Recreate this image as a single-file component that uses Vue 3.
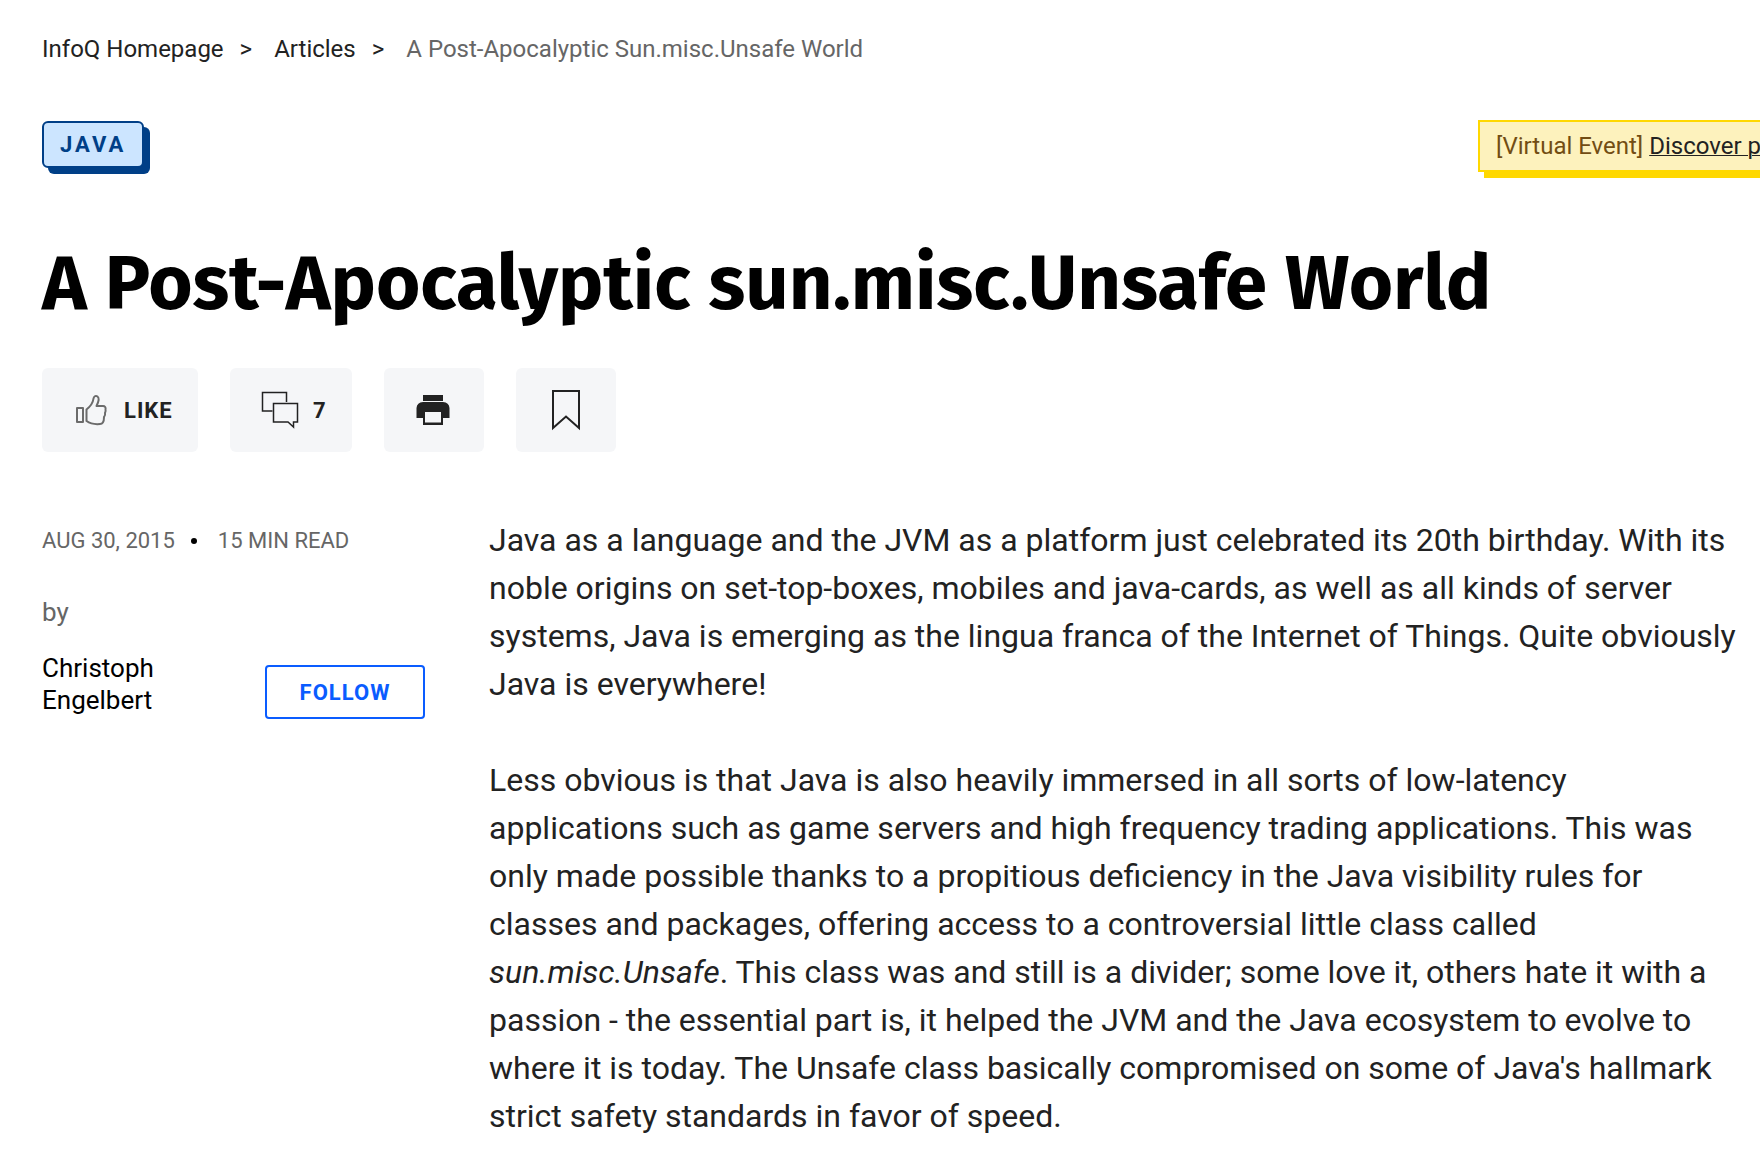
<script setup>
const crumbs = ['InfoQ Homepage', 'Articles']
</script>

<template>
  <div class="page">
    <nav class="crumbs" aria-label="Breadcrumb">
      <template v-for="crumb in crumbs" :key="crumb">
        <a href="#">{{ crumb }}</a>
        <span class="sep">&gt;</span>
      </template>
      <span class="current">A Post-Apocalyptic Sun.misc.Unsafe World</span>
    </nav>

    <div class="topics">
      <a class="tag" href="#">JAVA</a>
      <div class="banner">[Virtual Event] <a href="#">Discover p</a></div>
    </div>

    <h1>A Post-Apocalyptic sun.misc.Unsafe World</h1>

    <div class="actions">
      <button type="button" class="like">
        <svg width="34" height="34" viewBox="0 0 34 34" fill="none" stroke="#6b6b6b" stroke-width="2" stroke-linejoin="round">
          <path d="M3 15h6v14H3z" />
          <path d="M12.500 28V16.500C17 13 19 9.500 19.500 5.500C20 3 22 2.500 23.500 3.500C25.500 5 24.500 9 22.500 13H29C31 13 32 14.500 31.500 16.500C32 18 31.500 19 31 20C31.500 22 31 23 30 24C30 27 29 31 26 31C21 31.500 16 30.500 12.500 28z" />
        </svg>
        LIKE
      </button>
      <button type="button" class="comments">
        <svg width="38" height="38" viewBox="0 0 38 38" fill="none" stroke="#222" stroke-width="1.500">
          <path d="M11.500 20H1.500V1.500H25.500V11" />
          <path d="M12.500 12.500H36.500V31H32.500V36L27 31H12.500z" />
        </svg>
        7
      </button>
      <button type="button" class="square" aria-label="Print">
        <svg width="36" height="32" viewBox="0 0 36 32">
          <path fill="#222" d="M7 1H27V7H7zM7 8H27Q33 8.500 33.500 14V24H27V31H7V24H.5V14Q1 8.500 7 8z" />
          <path fill="#f5f6f8" d="M9 18H25V28.500H9z" />
        </svg>
      </button>
      <button type="button" class="square" aria-label="Bookmark">
        <svg width="28" height="42" viewBox="0 0 28 42" fill="none" stroke="#222" stroke-width="2">
          <path d="M1 2H27V39L14 27.500L1 39z" />
        </svg>
      </button>
    </div>

    <div class="content">
      <aside>
        <p class="meta"><span>AUG 30, 2015</span><span class="dot"></span><span>15 MIN READ</span></p>
        <p class="by">by</p>
        <div class="author">
          <a href="#">Christoph Engelbert</a>
          <button type="button" class="follow">FOLLOW</button>
        </div>
      </aside>
      <article>
        <p>
          Java as a language and the JVM as a platform just celebrated its 20th birthday. With its noble
          origins on set-top-boxes, mobiles and java-cards, as well as all kinds of server systems, Java is
          emerging as the lingua franca of the Internet of Things. Quite obviously Java is everywhere!
        </p>
        <p>
          Less obvious is that Java is also heavily immersed in all sorts of low-latency applications such
          as game servers and high frequency trading applications. This was only made possible thanks to a
          propitious deficiency in the Java visibility rules for classes and packages, offering access to a
          controversial little class called <em>sun.misc.Unsafe</em>. This class was and still is a divider;
          some love it, others hate it with a passion - the essential part is, it helped the JVM and the
          Java ecosystem to evolve to where it is today. The Unsafe class basically compromised on some of
          Java's hallmark strict safety standards in favor of speed.
        </p>
      </article>
    </div>
  </div>
</template>

<style>
body {
  background: #fff;
}
</style>

<style scoped>
.page {
  padding: 32px 0 16px 42px;
  overflow: hidden;
  font-family: Roboto, "Liberation Sans", sans-serif;
  color: #222;
}
a {
  color: inherit;
  text-decoration: none;
}
p,
h1 {
  margin: 0;
}
.crumbs {
  display: flex;
  font-size: 24px;
  line-height: 34px;
}
.sep {
  margin: 0 22px 0 16px;
}
.current {
  color: #666;
}
.topics {
  display: flex;
  justify-content: space-between;
  align-items: flex-start;
  margin-top: 54px;
}
.tag {
  margin-top: 1px;
  padding: 1px 16px 0;
  border: 2px solid #003f87;
  border-radius: 6px;
  background: #cce5ff;
  box-shadow: 6px 6px 0 #003f87;
  color: #003f87;
  font-size: 22px;
  font-weight: 700;
  line-height: 42px;
  letter-spacing: 3px;
}
.banner {
  box-sizing: border-box;
  flex: 0 0 282px;
  margin-right: -1px;
  padding: 1px 0 0 16px;
  border: 2px solid #ffd800;
  border-right: 0;
  background: #fdf2bd;
  box-shadow: 6px 6px 0 #ffd800;
  color: #724d13;
  font-size: 24px;
  line-height: 47px;
  white-space: nowrap;
}
.banner a {
  color: #222;
  text-decoration: underline;
  text-decoration-thickness: 1px;
}
h1 {
  margin-top: 64px;
  color: #000;
  font-family: "Fira Sans", "Noto Sans", sans-serif;
  font-size: 76px;
  font-weight: 700;
  line-height: 96px;
  white-space: nowrap;
}
.actions {
  display: flex;
  gap: 32px;
  margin-top: 36px;
}
.actions button {
  display: flex;
  align-items: center;
  height: 84px;
  padding: 0;
  border: 0;
  border-radius: 6px;
  background: #f5f6f8;
  color: #222;
  font: 700 22px Roboto, sans-serif;
  letter-spacing: 1px;
}
.actions .like {
  width: 156px;
  padding-left: 32px;
  gap: 16px;
}
.actions .comments {
  width: 122px;
  padding-left: 31px;
  gap: 14px;
}
.actions .square {
  width: 100px;
  justify-content: center;
}
.content {
  display: flex;
  gap: 64px;
  margin-top: 64px;
  padding-right: 18px;
}
aside {
  flex: 0 0 383px;
}
.meta {
  display: flex;
  align-items: center;
  color: #666;
  font-size: 22px;
  line-height: 50px;
}
.dot {
  width: 6px;
  height: 6px;
  margin: 0 21px 0 16px;
  border-radius: 50%;
  background: #000;
}
.by {
  margin-top: 30px;
  color: #666;
  font-size: 26px;
  line-height: 32px;
}
.author {
  display: flex;
  justify-content: space-between;
  margin-top: 24px;
}
.author a {
  width: 160px;
  color: #000;
  font-size: 26px;
  line-height: 32px;
}
.follow {
  width: 160px;
  height: 54px;
  margin-top: 13px;
  padding: 0;
  border: 2px solid #0a5cff;
  border-radius: 4px;
  background: #fff;
  color: #0a5cff;
  font: 700 22px Roboto, sans-serif;
  letter-spacing: 1px;
}
article {
  flex: 1;
  min-width: 0;
  font-size: 32px;
  line-height: 48px;
}
article p + p {
  margin-top: 48px;
}
</style>
